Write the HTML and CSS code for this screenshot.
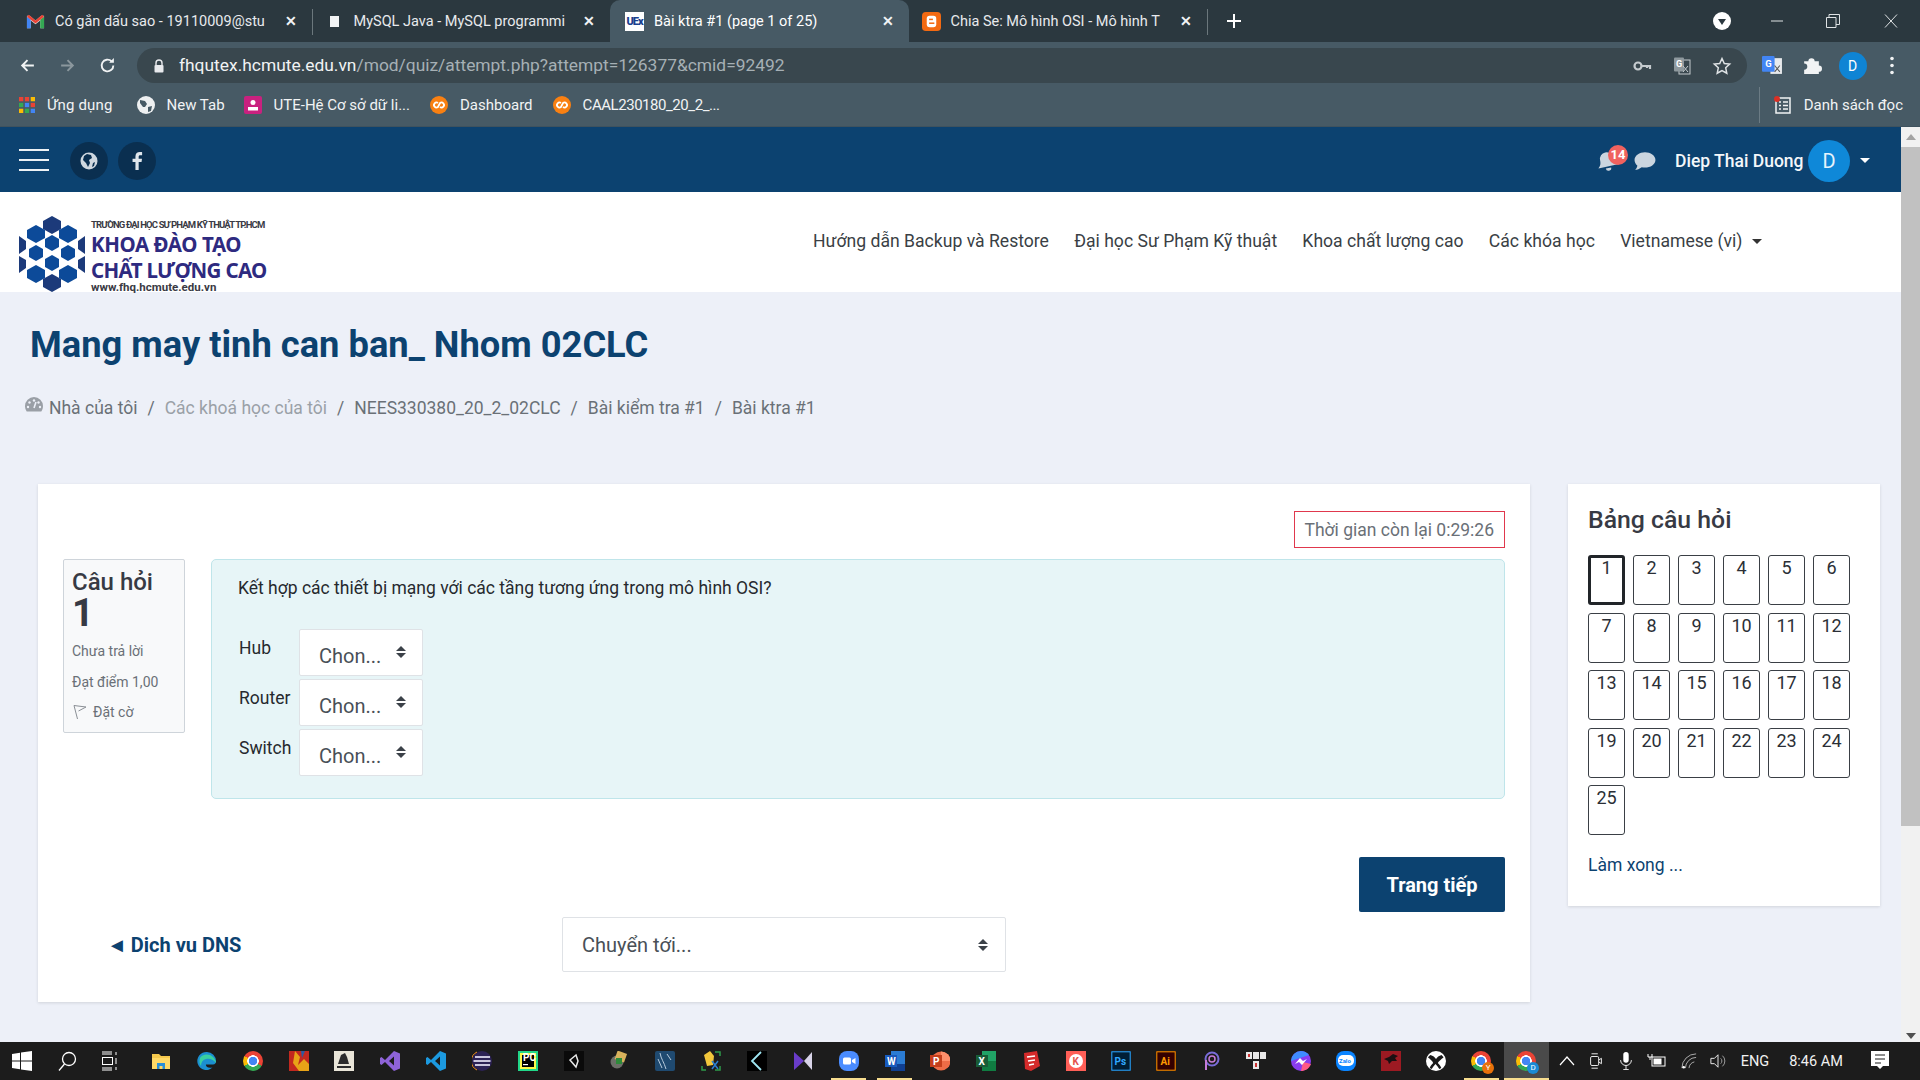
FILE: index.html

```html
<!DOCTYPE html>
<html lang="vi">
<head>
  <meta charset="UTF-8">
  <title>Bài ktra #1 (page 1 of 25)</title>
  <link rel="stylesheet" href="styles.css">
</head>
<body>
  <!-- browser chrome -->
  <div class="tabstrip">
    <div class="tab">
      <svg class="favicon" viewBox="0 0 20 16"><path d="M1 15V2l3 0 6 5 6-5h3v13h-4V7l-5 4-5-4v8z" fill="#e8e8e8"/><path d="M1 15V3l4 3v9z" fill="#4285f4"/><path d="M15 15V6l4-3v12z" fill="#34a853"/><path d="M1 3l2-2 7 6 7-6 2 2-9 7z" fill="#ea4335"/></svg>
      <span class="tab-title">Có gắn dấu sao - 19110009@stu</span>
      <span class="tab-x">✕</span>
    </div>
    <div class="tab tab-sep">
      <span class="favicon fav-doc"><i></i></span>
      <span class="tab-title">MySQL Java - MySQL programmi</span>
      <span class="tab-x">✕</span>
    </div>
    <div class="tab tab-active">
      <span class="favicon fav-ute">UEx</span>
      <span class="tab-title">Bài ktra #1 (page 1 of 25)</span>
      <span class="tab-x">✕</span>
    </div>
    <div class="tab tab-sep-right">
      <svg class="favicon" viewBox="0 0 20 20"><rect width="20" height="20" rx="4" fill="#f36a12"/><rect x="5" y="4" width="10" height="12" rx="3" fill="#fff"/><rect x="7.5" y="7" width="4" height="1.6" fill="#f36a12"/><rect x="7.5" y="11" width="5.5" height="1.6" fill="#f36a12"/></svg>
      <span class="tab-title">Chia Se: Mô hình OSI - Mô hình T</span>
      <span class="tab-x">✕</span>
    </div>
    <svg class="new-tab" viewBox="0 0 16 16"><path d="M8 1v14M1 8h14" stroke="#fff" stroke-width="2"/></svg>
    <div class="win-controls">
      <svg class="profile-drop" viewBox="0 0 18 18"><circle cx="9" cy="9" r="9" fill="#fff"/><path d="M5 7h8l-4 6z" fill="#2b383f"/></svg>
      <svg class="win-btn" viewBox="0 0 14 14"><path d="M1 7h12" stroke="#dfe3e5"/></svg>
      <svg class="win-btn" viewBox="0 0 14 14"><path d="M.5 3.500h9.500v10H.5zM3 3.500V.5h10.500v10H10" fill="none" stroke="#dfe3e5"/></svg>
      <svg class="win-btn" viewBox="0 0 14 14"><path d="M1 .5l12 13M13 .5L1 13.500" stroke="#dfe3e5"/></svg>
    </div>
  </div>

  <div class="toolbar">
    <svg class="tool-ic" viewBox="0 0 16 16"><path d="M14 8H3M8 3L3 8l5 5" fill="none" stroke="#f1f3f4" stroke-width="1.800"/></svg>
    <svg class="tool-ic" viewBox="0 0 16 16"><path d="M2 8h11M8 3l5 5-5 5" fill="none" stroke="#8b979d" stroke-width="1.800"/></svg>
    <svg class="tool-ic" viewBox="0 0 16 16"><path d="M13.500 8a5.500 5.500 0 1 1-1.700-4" fill="none" stroke="#f1f3f4" stroke-width="1.800"/><path d="M9.500 5.500H14V1z" fill="#f1f3f4"/></svg>
    <div class="omnibox">
      <svg class="lock" viewBox="0 0 12 14"><path d="M3 6V4a3 3 0 0 1 6 0v2" fill="none" stroke="#e8eaed" stroke-width="1.400"/><rect x="1.500" y="6" width="9" height="7.500" rx="1" fill="#e8eaed"/></svg>
      <span class="url"><b>fhqutex.hcmute.edu.vn</b>/mod/quiz/attempt.php?attempt=126377&amp;cmid=92492</span>
      <svg class="omni-ic" viewBox="0 0 20 20"><circle cx="6" cy="10" r="3.500" fill="none" stroke="#c5cbce" stroke-width="2.200"/><path d="M9 10h9v3M15 10v2" fill="none" stroke="#c5cbce" stroke-width="2.200"/></svg>
      <svg class="omni-ic" viewBox="0 0 20 20"><rect x="7" y="4" width="11" height="14" fill="#39474e" stroke="#c5cbce"/><rect x="2" y="1.500" width="10" height="14" rx="1" fill="#8f999e"/><text x="4" y="11" class="g-letter">G</text><path d="M11 10l5 6M16 10l-5 6" stroke="#c5cbce"/></svg>
      <svg class="omni-ic" viewBox="0 0 20 20"><path d="M10 2.500l2.300 5 5.400.6-4 3.700 1.100 5.400-4.800-2.700-4.800 2.700 1.100-5.400-4-3.700 5.400-.6z" fill="none" stroke="#dfe3e5" stroke-width="1.500"/></svg>
    </div>
    <svg class="ext-ic" viewBox="0 0 20 20"><rect x="8" y="3" width="11" height="15" fill="#e8eaed"/><rect x="0" y="1" width="12" height="15" rx="1" fill="#4285f4"/><text x="3" y="11" class="g-letter">G</text><path d="M12 10l5 6M17 10l-5 6" stroke="#555"/></svg>
    <svg class="ext-ic" viewBox="0 0 20 20"><path d="M3 6h4a3 3 0 0 1 6 0h4v4a3 3 0 0 1 0 6v2H3v-4a3 3 0 0 0 0-6z" fill="#f1f3f4"/></svg>
    <span class="profile-dot">D</span>
    <svg class="ext-ic kebab" viewBox="0 0 6 20"><circle cx="3" cy="3" r="1.800" fill="#f1f3f4"/><circle cx="3" cy="10" r="1.800" fill="#f1f3f4"/><circle cx="3" cy="17" r="1.800" fill="#f1f3f4"/></svg>
  </div>

  <div class="bookmarks">
    <span class="bm"><svg class="bm-ic" viewBox="0 0 15 15"><rect width="4" height="4" fill="#ea4335"/><rect x="5.500" width="4" height="4" fill="#ea4335"/><rect x="11" width="4" height="4" fill="#fbbc05"/><rect y="5.500" width="4" height="4" fill="#34a853"/><rect x="5.500" y="5.500" width="4" height="4" fill="#4285f4"/><rect x="11" y="5.500" width="4" height="4" fill="#ea4335"/><rect y="11" width="4" height="4" fill="#fbbc05"/><rect x="5.500" y="11" width="4" height="4" fill="#34a853"/><rect x="11" y="11" width="4" height="4" fill="#4285f4"/></svg>Ứng dụng</span>
    <span class="bm"><svg class="bm-ic" viewBox="0 0 18 18"><circle cx="9" cy="9" r="9" fill="#eef0f1"/><path d="M3 4l5 1 2 3-2 3-2 0-3-4zM11 11l4-1-1 5-3 1z" fill="#475a65"/></svg>New Tab</span>
    <span class="bm"><svg class="bm-ic" viewBox="0 0 18 18"><rect width="18" height="18" rx="2" fill="#c9217f"/><circle cx="9" cy="6.500" r="2.500" fill="#fff"/><rect x="4" y="11" width="10" height="3.500" fill="#fff"/></svg>UTE-Hệ Cơ sở dữ li...</span>
    <span class="bm"><svg class="bm-ic" viewBox="0 0 18 18"><circle cx="9" cy="9" r="9" fill="#f98012"/><path d="M8 7a2.500 2.500 0 1 0 0 4l2-4a2.500 2.500 0 1 1 0 4" fill="none" stroke="#fff" stroke-width="1.800"/></svg>Dashboard</span>
    <span class="bm"><svg class="bm-ic" viewBox="0 0 18 18"><circle cx="9" cy="9" r="9" fill="#f98012"/><path d="M8 7a2.500 2.500 0 1 0 0 4l2-4a2.500 2.500 0 1 1 0 4" fill="none" stroke="#fff" stroke-width="1.800"/></svg>CAAL230180_20_2_...</span>
    <span class="reading-list"><svg class="bm-ic" viewBox="0 0 18 18"><rect x="2" y="2" width="14" height="15" fill="none" stroke="#f1f3f4" stroke-width="1.500"/><path d="M5 6h2M9 6h5M5 9.500h2M9 9.500h5M5 13h2M9 13h5" stroke="#f1f3f4" stroke-width="1.500"/><circle cx="3" cy="3" r="3" fill="#d93025"/></svg>Danh sách đọc</span>
  </div>

  <!-- page viewport -->
  <div class="viewport">
    <div class="page">
      <nav class="topbar">
        <div class="burger"><i></i><i></i><i></i></div>
        <span class="social"><svg viewBox="0 0 18 18" class="social-ic"><circle cx="9" cy="9" r="8.500" fill="#cfd8e0"/><path d="M7 2l4 1 1 3-3 2 1 3-2 4-2-4-3-3 1-4zM13 11l2-1-1 4-2 1z" fill="#0a2f50"/></svg></span>
        <span class="social"><svg viewBox="0 0 18 18" class="social-ic social-fb"><path d="M10.500 17V10h2.600l.4-3h-3V5.200c0-.9.300-1.400 1.500-1.400h1.600V1.100C13.300 1 12.400 1 11.500 1 9.200 1 7.600 2.400 7.600 4.900V7H5v3h2.600v7z" fill="#dfe6ec"/></svg></span>
        <div class="user-area">
          <span class="bell">
            <svg viewBox="0 0 20 20" class="bell-ic"><path d="M10 2a6 6 0 0 1 6 6c0 4 1 5 3 7H1c2-2 3-3 3-7a6 6 0 0 1 6-6zM7.500 16.500h5a2.500 2.500 0 0 1-5 0z" fill="#cbd5df"/></svg>
            <span class="badge">14</span>
          </span>
          <svg viewBox="0 0 20 18" class="chat-ic"><path d="M10 1c5 0 9.500 3 9.500 7s-4.500 7-9.500 7c-1 0-2-.1-3-.4C5 16 3 17 1 17c1.500-1.500 2-3 2-4C1.500 11.800.5 10 .5 8 .5 4 5 1 10 1z" fill="#cbd5df"/></svg>
          <span class="user-name">Diep Thai Duong</span>
          <span class="avatar">D</span>
          <i class="caret caret-white"></i>
        </div>
      </nav>

      <header class="brand-bar">
        <div class="logo">
          <svg class="logo-hex" viewBox="0 0 66 76">
            <g fill="#0c4a99">
              <polygon points="33,0 42,5 42,13 33,18 24,13 24,5" fill="#1c3a7a"/>
              <polygon points="17,9 26,14 26,22 17,27 8,22 8,14"/>
              <polygon points="49,9 58,14 58,22 49,27 40,22 40,14"/>
              <polygon points="33,19 40,23 40,31 33,35 26,31 26,23"/>
              <polygon points="17,29 24,33 24,41 17,45 10,41 10,33"/>
              <polygon points="49,29 56,33 56,41 49,45 42,41 42,33"/>
              <polygon points="33,39 40,43 40,51 33,55 26,51 26,43"/>
              <polygon points="17,49 26,54 26,62 17,67 8,62 8,54"/>
              <polygon points="49,49 58,54 58,62 49,67 40,62 40,54"/>
              <polygon points="33,58 42,63 42,71 33,76 24,71 24,63" fill="#1c3a7a"/>
              <polygon points="0,20 7,25 7,33 0,38" fill="#1c3a7a"/>
              <polygon points="66,20 59,25 59,33 66,38" fill="#1c3a7a"/>
              <polygon points="0,40 7,44 7,52 0,57" fill="#1c3a7a"/>
              <polygon points="66,40 59,44 59,52 66,57" fill="#1c3a7a"/>
            </g>
          </svg>
          <div class="logo-text">
            <span class="logo-school">TRƯỜNG ĐẠI HỌC SƯ PHẠM KỸ THUẬT TP.HCM</span>
            <span class="logo-big logo-big-top">KHOA ĐÀO TẠO</span>
            <span class="logo-big">CHẤT LƯỢNG CAO</span>
            <span class="logo-web">www.fhq.hcmute.edu.vn</span>
          </div>
        </div>
        <ul class="main-menu">
          <li>Hướng dẫn Backup và Restore</li>
          <li>Đại học Sư Phạm Kỹ thuật</li>
          <li>Khoa chất lượng cao</li>
          <li>Các khóa học</li>
          <li>Vietnamese ‎(vi)‎ <i class="caret caret-dark"></i></li>
        </ul>
      </header>

      <div class="course-head">
        <h1>Mang may tinh can ban_ Nhom 02CLC</h1>
        <div class="crumbs">
          <svg class="crumb-ic" viewBox="0 0 18 15"><path d="M9 0a9 9 0 0 1 9 9c0 2-.6 4-1.700 5.500H1.700A9 9 0 0 1 0 9a9 9 0 0 1 9-9z" fill="#9a9fa6"/><circle cx="9" cy="3.500" r="1.200" fill="#edf0f8"/><circle cx="4.500" cy="5.500" r="1.200" fill="#edf0f8"/><circle cx="13.500" cy="5.500" r="1.200" fill="#edf0f8"/><circle cx="3" cy="10" r="1.200" fill="#edf0f8"/><circle cx="15" cy="10" r="1.200" fill="#edf0f8"/><path d="M9 11l2-6" stroke="#edf0f8" stroke-width="1.600"/></svg>
          <span>Nhà của tôi</span><em>/</em>
          <span class="crumb-light">Các khoá học của tôi</span><em>/</em>
          <span>NEES330380_20_2_02CLC</span><em>/</em>
          <span>Bài kiểm tra #1</span><em>/</em>
          <span>Bài ktra #1</span>
        </div>
      </div>

      <div class="content">
        <main class="quiz-card">
          <div class="timer-row"><div class="timer">Thời gian còn lại 0:29:26</div></div>
          <div class="question">
            <aside class="q-info">
              <h3>Câu hỏi <span class="q-no">1</span></h3>
              <p>Chưa trả lời</p>
              <p>Đạt điểm 1,00</p>
              <p class="flag"><svg viewBox="0 0 14 16" class="flag-ic"><path d="M4.500 15L1 1.500l12 1.500-7.500 4" fill="none" stroke="#8a8f95"/></svg>Đặt cờ</p>
            </aside>
            <div class="q-body">
              <p class="q-text">Kết hợp các thiết bị mạng với các tầng tương ứng trong mô hình OSI?</p>
              <div class="match-row"><span class="match-label">Hub</span><div class="pick"><span>Chon...</span><i class="updown"></i></div></div>
              <div class="match-row"><span class="match-label">Router</span><div class="pick"><span>Chon...</span><i class="updown"></i></div></div>
              <div class="match-row"><span class="match-label">Switch</span><div class="pick"><span>Chon...</span><i class="updown"></i></div></div>
            </div>
          </div>
          <div class="next-row"><span class="next-btn">Trang tiếp</span></div>
          <div class="activity-nav">
            <span class="prev-link"><i class="prev-arrow">◄</i> Dich vu DNS</span>
            <div class="jump"><span>Chuyển tới...</span><i class="updown updown-sm"></i></div>
          </div>
        </main>

        <aside class="nav-card">
          <h2>Bảng câu hỏi</h2>
          <div class="q-grid">
            <span class="q-btn q-current">1</span><span class="q-btn">2</span><span class="q-btn">3</span><span class="q-btn">4</span><span class="q-btn">5</span>
            <span class="q-btn">6</span><span class="q-btn">7</span><span class="q-btn">8</span><span class="q-btn">9</span><span class="q-btn">10</span>
            <span class="q-btn">11</span><span class="q-btn">12</span><span class="q-btn">13</span><span class="q-btn">14</span><span class="q-btn">15</span>
            <span class="q-btn">16</span><span class="q-btn">17</span><span class="q-btn">18</span><span class="q-btn">19</span><span class="q-btn">20</span>
            <span class="q-btn">21</span><span class="q-btn">22</span><span class="q-btn">23</span><span class="q-btn">24</span><span class="q-btn">25</span>
          </div>
          <a class="finish">Làm xong ...</a>
        </aside>
      </div>
    </div>

    <div class="scrollbar">
      <i class="sb-up"></i>
      <div class="sb-thumb"></div>
      <i class="sb-down"></i>
    </div>
  </div>

  <!-- windows taskbar -->
  <footer class="taskbar">
    <span class="tb-item"><svg viewBox="0 0 20 20"><path d="M0 3l8-1.200V9.500H0zM9 1.600L20 0v9.500H9zM0 10.500h8v7.700L0 17zM9 10.500h11V20L9 18.400z" fill="#fff"/></svg></span>
    <span class="tb-item"><svg viewBox="0 0 20 20"><circle cx="12" cy="8" r="6.500" fill="none" stroke="#fff" stroke-width="1.300"/><path d="M7.500 13L2 19.500" stroke="#fff" stroke-width="1.300"/></svg></span>
    <span class="tb-item"><svg viewBox="0 0 20 20"><path d="M1 1h10M1 3h10M1 17h10M1 19h10M15 1v3M15 7v6M15 16v3" stroke="#fff"/><rect x="1.500" y="6.500" width="10" height="7" fill="none" stroke="#fff"/></svg></span>
    <span class="tb-item"><svg viewBox="0 0 20 20"><path d="M1 3h7l2 2h9v13H1z" fill="#f5c84c"/><path d="M1 7h18v11H1z" fill="#ffd966"/><path d="M6 12h8v6h-2.500v-3h-3v3H6z" fill="#2a8fd6"/></svg></span>
    <span class="tb-item"><svg viewBox="0 0 20 20"><path d="M10 1a9 9 0 0 1 9 9c0 2-1 3.500-3 3.500H9c-.6 2.500 2.500 4 6.500 3A9 9 0 1 1 10 1z" fill="#1b8fd0"/><path d="M3 7c2-4 9-5 13-1 2 2 3 4 3 6-2-3-6-5-10-4-3 .8-5 3-5 7-1.500-2-2-5-1-8z" fill="#39d0a0"/></svg></span>
    <span class="tb-item"><span class="ic-chrome"></span></span>
    <span class="tb-item"><svg viewBox="0 0 20 20"><rect width="20" height="20" fill="#c2281f"/><path d="M6 0l5 6-2 8 6-6 5 5v7H10L4 12z" fill="#e8a317"/><path d="M12 0h4l-3 7z" fill="#2c5aa0"/></svg></span>
    <span class="tb-item"><svg viewBox="0 0 20 20"><rect width="20" height="20" fill="#e9e5d8"/><path d="M4 13l3-9 4-2 2 4 2 7z" fill="#2b2b2b"/><rect x="3" y="15" width="14" height="2" fill="#2b2b2b"/></svg></span>
    <span class="tb-item"><svg viewBox="0 0 20 20"><path d="M14 0l6 2.500v15L14 20 5 11l-3.500 3L0 13V7l1.500-1L5 9zM14 5.500L9 10l5 4.500z" fill="#8e63d8"/></svg></span>
    <span class="tb-item"><svg viewBox="0 0 20 20"><path d="M14 0l6 2.500v15L14 20 5 11l-3.500 3L0 13V7l1.500-1L5 9zM14 5.500L9 10l5 4.500z" fill="#1c9ae0"/></svg></span>
    <span class="tb-item"><svg viewBox="0 0 20 20"><circle cx="10" cy="10" r="10" fill="#2c2255"/><path d="M3 6h15M1.500 10h17M3 14h15" stroke="#c9c5dd" stroke-width="2.200"/><path d="M5 1A10 10 0 0 0 5 19" fill="none" stroke="#f7941e"/></svg></span>
    <span class="tb-item"><svg viewBox="0 0 20 20"><rect width="20" height="20" fill="#21d789"/><rect x="2" y="2" width="16" height="16" fill="#fcf84a"/><rect x="4" y="4" width="12" height="12" fill="#000"/><rect x="5" y="13" width="5" height="1.200" fill="#fff"/><text x="5" y="10" class="tiny-letter">PC</text></svg></span>
    <span class="tb-item"><svg viewBox="0 0 20 20"><rect width="20" height="20" fill="#0a0a0a"/><path d="M12 4l-6 5 6 7 2-6z" fill="none" stroke="#e8e8e8" stroke-width="1.500"/></svg></span>
    <span class="tb-item"><svg viewBox="0 0 20 20"><circle cx="8" cy="11" r="6.500" fill="#6d7069"/><rect x="7" y="1" width="10" height="9" transform="rotate(20 12 5)" fill="#d8b25c"/><rect x="7" y="7" width="6" height="6" fill="#2e8b3a"/></svg></span>
    <span class="tb-item"><svg viewBox="0 0 20 20"><rect width="20" height="20" rx="2" fill="#1f4a70"/><path d="M5 2c1 6 4 9 6 16M12 3l4 6M3 8l4 9" stroke="#b7cbdc" fill="none"/></svg></span>
    <span class="tb-item"><svg viewBox="0 0 20 20"><path d="M3 4l6-4 4 5-1 9-6 1z" fill="#f2c63b"/><path d="M14 1h5v4M19 15v4h-5M1 15v4h4" fill="none" stroke="#2e9a4a" stroke-width="1.500"/><path d="M11 10l6 8M17 10l-6 8" stroke="#2a7fd0" stroke-width="1.500"/></svg></span>
    <span class="tb-item"><svg viewBox="0 0 20 20"><rect width="20" height="20" fill="#000"/><path d="M14 1L5 10l9 9" fill="none" stroke="#9fe6f2" stroke-width="1.800"/></svg></span>
    <span class="tb-item"><svg viewBox="0 0 20 20"><path d="M1 1l10 9-10 9z" fill="#6a3cc9"/><path d="M19 1v18l-8-9z" fill="#d8d4e8"/></svg></span>
    <span class="tb-item"><svg viewBox="0 0 20 20"><rect y="0" width="20" height="20" rx="8" fill="#4a8cff"/><rect x="4" y="6.500" width="8" height="7" rx="1.500" fill="#fff"/><path d="M13 9l3.500-2v6L13 11z" fill="#fff"/></svg></span>
    <span class="tb-item"><svg viewBox="0 0 20 20"><rect x="6" y="0" width="14" height="20" fill="#2b7cd3"/><rect x="6" y="13" width="14" height="7" fill="#103f91"/><rect x="0" y="4" width="12" height="12" fill="#185abd"/><text x="2" y="14" class="tiny-letter">W</text></svg></span>
    <span class="tb-item"><svg viewBox="0 0 20 20"><circle cx="11" cy="10" r="9.500" fill="#ed6c47"/><path d="M11 .5A9.500 9.500 0 0 1 20.500 10H11z" fill="#ff8f6b"/><rect x="0" y="4" width="12" height="12" fill="#c43e1c"/><text x="3" y="14" class="tiny-letter">P</text></svg></span>
    <span class="tb-item"><svg viewBox="0 0 20 20"><rect x="6" y="0" width="14" height="20" fill="#21a366"/><rect x="6" y="10" width="14" height="10" fill="#107c41"/><rect x="0" y="4" width="12" height="12" fill="#185c37"/><text x="2.500" y="14" class="tiny-letter">X</text></svg></span>
    <span class="tb-item"><svg viewBox="0 0 20 20"><path d="M3 2l13-2 3 15-9 5-6-2z" fill="#d52b2b"/><path d="M6 6l8-1M7 10l7-1M8 14l5-1" stroke="#fff" stroke-width="1.400"/></svg></span>
    <span class="tb-item"><svg viewBox="0 0 20 20"><rect width="20" height="20" fill="#ff5f57"/><circle cx="10" cy="10" r="7" fill="#fff"/><text x="6.500" y="14" class="tiny-letter tiny-red">K</text></svg></span>
    <span class="tb-item"><svg viewBox="0 0 20 20"><rect width="20" height="20" fill="#001e36"/><rect x=".8" y=".8" width="18.400" height="18.400" fill="none" stroke="#31a8ff"/><text x="3.500" y="14" class="tiny-letter tiny-blue">Ps</text></svg></span>
    <span class="tb-item"><svg viewBox="0 0 20 20"><rect width="20" height="20" fill="#330000"/><rect x=".8" y=".8" width="18.400" height="18.400" fill="none" stroke="#ff9a00"/><text x="4.500" y="14" class="tiny-letter tiny-orange">Ai</text></svg></span>
    <span class="tb-item"><svg viewBox="0 0 20 20"><circle cx="11" cy="8" r="6.500" fill="none" stroke="#7a6cd8" stroke-width="2"/><circle cx="11" cy="8" r="3" fill="none" stroke="#c77bd8" stroke-width="1.500"/><path d="M5 9v10" stroke="#c77bd8" stroke-width="2"/></svg></span>
    <span class="tb-item"><svg viewBox="0 0 20 20"><rect x="0" y="1" width="6" height="7" fill="#e8e8e8"/><rect x="7" y="1" width="6" height="7" fill="#e8e8e8"/><rect x="14" y="1" width="6" height="7" fill="#e8e8e8"/><rect x="7" y="10" width="6" height="8" fill="#e8e8e8"/><rect x="2" y="3" width="2" height="3" fill="#c33"/><rect x="9" y="12" width="2" height="4" fill="#c33"/></svg></span>
    <span class="tb-item"><svg viewBox="0 0 20 20"><circle cx="10" cy="10" r="10" fill="#8a3cf0"/><path d="M0 10a10 10 0 0 1 10-10c3 0 6 1.500 8 4z" fill="#3f8cff"/><path d="M10 20c4 0 8-2 10-7l-8-2z" fill="#ff5b84"/><path d="M4 13l5-6 3 3 4-2-5 6-3-3z" fill="#fff"/></svg></span>
    <span class="tb-item"><svg viewBox="0 0 20 20"><rect width="20" height="20" rx="8" fill="#0a84ff"/><rect x="2" y="4" width="16" height="11" rx="5" fill="#fff"/><text x="3" y="12" class="tiny-letter tiny-zalo">Zalo</text></svg></span>
    <span class="tb-item"><svg viewBox="0 0 20 20"><rect width="20" height="20" fill="#9c1a22"/><path d="M3 8l5-2 4-3 5 2-3 2 2 3-5 0-3 3-1-3z" fill="#1a1012"/></svg></span>
    <span class="tb-item"><svg viewBox="0 0 20 20"><path d="M10 0a10 10 0 1 1 0 20 10 10 0 0 1 0-20z" fill="#fff"/><path d="M4.500 4c2.500.7 4.300 2.200 5.500 4 1.200-1.800 3-3.300 5.500-4 1 1 1.500 1.500 2 2.500-2.300 1.500-4.500 3.700-5.700 5.500 1.700 1.700 3 3.500 3.500 5-.7.500-1.300.8-2 1-1-1.700-2.300-3.300-3.800-5-1.500 1.700-2.800 3.300-3.800 5-.7-.2-1.300-.5-2-1 .5-1.500 1.800-3.300 3.500-5C6.500 10.200 4.300 8 2 6.500 2.500 5.500 3.500 4.800 4.500 4z" fill="#1a1a1a"/></svg></span>
    <span class="tb-item tb-running"><span class="ic-chrome"><i class="chrome-badge chrome-badge-y">Y</i></span></span>
    <span class="tb-item tb-running tb-active"><span class="ic-chrome"><i class="chrome-badge">D</i></span></span>
    <div class="tray">
      <svg class="tray-ic" viewBox="0 0 16 16"><path d="M1 12l7-8 7 8" fill="none" stroke="#fff" stroke-width="1.200"/></svg>
      <svg class="tray-ic" viewBox="0 0 16 20"><rect x="2" y="5" width="9" height="10" rx="1.500" fill="none" stroke="#fff"/><path d="M11 9l3-2v6l-3-2M3 2h7M3 18h7" fill="none" stroke="#fff"/></svg>
      <svg class="tray-ic" viewBox="0 0 14 20"><rect x="4" y="0" width="6" height="12" rx="3" fill="#fff"/><path d="M1 9a6 6 0 0 0 12 0M7 15v4M4 19.500h6" fill="none" stroke="#fff"/></svg>
      <svg class="tray-ic tray-wide" viewBox="0 0 20 16"><rect x="5" y="4" width="13" height="9" fill="none" stroke="#fff"/><rect x="6.500" y="5.500" width="8" height="6" fill="#fff"/><path d="M1 1v3h4V1M3 4v3" fill="none" stroke="#fff"/></svg>
      <svg class="tray-ic" viewBox="0 0 18 18"><path d="M1 17A16 16 0 0 1 17 1M5 17A12 12 0 0 1 17 5M9 17a8 8 0 0 1 6-7" fill="none" stroke="#bbb"/><circle cx="3" cy="16" r="1.500" fill="#fff"/></svg>
      <svg class="tray-ic" viewBox="0 0 18 18"><path d="M1 6h4l4-4v14l-4-4H1z" fill="none" stroke="#fff"/><path d="M12 6a4 4 0 0 1 0 6M14 3a8 8 0 0 1 0 12" fill="none" stroke="#aaa"/></svg>
      <span class="tray-text tray-lang">ENG</span>
      <span class="tray-text tray-time">8:46 AM</span>
      <svg class="tray-ic tray-note" viewBox="0 0 18 20"><path d="M0 0h18v15h-6l-3 3-3-3H0z" fill="#fff"/><path d="M4 4h10M4 8h10M4 12h6" stroke="#1c1c1c" stroke-width="1.200"/></svg>
    </div>
  </footer>
</body>
</html>
```

FILE: styles.css

```css
/* Reset */
* { margin: 0; padding: 0; box-sizing: border-box; }
html, body {
  width: 1920px;
  height: 1080px;
  overflow: hidden;
}
body {
  display: flex;
  flex-direction: column;
  font-family: Roboto, "Noto Sans", sans-serif;
  color: #333;
  background: #edf0f8;
}
i, em { font-style: normal; }

/* tab strip */
.tabstrip {
  height: 42px;
  flex: none;
  display: flex;
  align-items: center;
  padding-left: 13px;
  background: #2b383f;
}
.tab {
  width: 298.500px;
  height: 42px;
  display: flex;
  align-items: center;
  padding: 0 15px 0 13px;
  color: #e8eaed;
  font-size: 14.500px;
  flex: none;
  position: relative;
}
.tab-sep::before {
  content: "";
  position: absolute;
  left: 0; top: 9px;
  width: 1px; height: 26px;
  background: #6b777c;
}
.tab-sep-right::after {
  content: "";
  position: absolute;
  right: -1px; top: 9px;
  width: 1px; height: 26px;
  background: #6b777c;
}
.tab-active {
  background: #475a65;
  border-radius: 10px 10px 0 0;
  color: #fff;
  padding-left: 15px;
}
.favicon {
  width: 19px;
  height: 19px;
  flex: none;
  margin-right: 10px;
  display: inline-flex;
  align-items: center;
  justify-content: center;
}
.fav-doc i {
  width: 9px;
  height: 11px;
  background: #f1f3f4;
}
.fav-ute {
  background: #fff;
  color: #1b3f8f;
  font-size: 11px;
  font-weight: 900;
  letter-spacing: -1px;
  overflow: hidden;
}
.tab-title {
  flex: 1;
  min-width: 0;
  white-space: nowrap;
}
.tab-x {
  margin-left: 12px;
  font-size: 14px;
  font-weight: 700;
  color: #f1f3f4;
  width: 12px;
}
.new-tab {
  width: 16px;
  height: 16px;
  margin-left: 19px;
}
.win-controls {
  margin-left: auto;
  display: flex;
  align-items: center;
  padding-right: 22px;
}
.profile-drop {
  width: 18px;
  height: 18px;
  margin-right: 39px;
}
.win-btn {
  width: 14px;
  height: 14px;
  margin-left: 42px;
}
.profile-drop + .win-btn { margin-left: 0; }
.win-btn:last-child { margin-left: 44px; }

/* toolbar */
.toolbar {
  height: 42px;
  flex: none;
  display: flex;
  align-items: center;
  padding: 5px 0 0 19px;
  background: #475a65;
}
.tool-ic {
  width: 17px;
  height: 17px;
  margin: -1px 23px 0 0;
  flex: none;
}
.tool-ic:nth-child(3) { margin-right: 21px; }
.omnibox {
  width: 1610px;
  height: 35px;
  flex: none;
  display: flex;
  align-items: center;
  background: #39474e;
  border-radius: 18px;
  padding: 0 15px 0 16px;
}
.lock {
  width: 12px;
  height: 14px;
  margin-right: 14px;
}
.url {
  flex: 1;
  font-size: 17.400px;
  line-height: 24px;
  margin-top: -2px;
  color: #a6b0b5;
  white-space: nowrap;
}
.url b {
  font-weight: 400;
  color: #f1f3f4;
}
.omni-ic {
  width: 20px;
  height: 20px;
  margin-left: 20px;
}
.g-letter {
  font-size: 9px;
  font-weight: 700;
  fill: #fff;
}
.ext-ic {
  width: 21px;
  height: 21px;
  margin-left: 18px;
  flex: none;
}
.omnibox + .ext-ic { margin-left: 14.500px; }
.profile-dot {
  width: 28px;
  height: 28px;
  margin-left: 17px;
  border-radius: 50%;
  background: #0f84d4;
  color: #fff;
  font-size: 14px;
  display: flex;
  align-items: center;
  justify-content: center;
  flex: none;
}
.kebab {
  width: 6px;
  margin-left: 22px;
}

/* bookmarks */
.bookmarks {
  height: 43px;
  flex: none;
  display: flex;
  align-items: center;
  padding-left: 19px;
  background: #475a65;
  color: #f1f3f4;
  font-size: 15px;
  border-bottom: 1px solid #3f525e;
}
.bm {
  display: flex;
  align-items: center;
  margin-right: 20px;
  white-space: nowrap;
}
.bm:first-child {
  margin-right: 24px;
  letter-spacing: .15px;
}
.bm:nth-child(2) { margin-right: 19px; }
.bm:nth-child(5) { letter-spacing: -.45px; }
.bm-ic {
  width: 18px;
  height: 18px;
  margin-right: 12px;
  flex: none;
}
.bm:first-child .bm-ic { width: 16px; height: 16px; }
.reading-list {
  margin-left: auto;
  height: 36px;
  display: flex;
  align-items: center;
  padding-left: 14px;
  padding-right: 17px;
  border-left: 1px solid #6b7b84;
  white-space: nowrap;
}

/* viewport */
.viewport {
  flex: 1;
  min-height: 0;
  display: flex;
}
.page {
  flex: 1;
  min-width: 0;
  overflow: hidden;
}
.scrollbar {
  width: 19px;
  flex: none;
  background: #f1f1f1;
  display: flex;
  flex-direction: column;
  align-items: center;
}
.sb-thumb {
  width: 100%;
  height: 679px;
  background: #c1c1c1;
}
.sb-up, .sb-down {
  width: 0; height: 0;
  border-left: 5px solid transparent;
  border-right: 5px solid transparent;
}
.sb-up {
  border-bottom: 6px solid #a3a3a3;
  margin: 7px 0 7px;
}
.sb-down {
  border-top: 6px solid #505050;
  margin-top: auto;
  margin-bottom: 3px;
}

/* top navbar */
.topbar {
  height: 65px;
  display: flex;
  align-items: center;
  padding: 2px 0 0 19px;
  background: #0c4270;
  color: #fff;
}
.burger {
  width: 30px;
  height: 22px;
  display: flex;
  flex-direction: column;
  justify-content: space-between;
  margin: -2px 21px 0 0;
}
.burger i {
  height: 2px;
  background: #eef2f5;
}
.social {
  width: 38px;
  height: 38px;
  margin-right: 10px;
  border-radius: 50%;
  background: #0a2f50;
  display: flex;
  align-items: center;
  justify-content: center;
}
.social-ic {
  width: 18px;
  height: 18px;
}
.social-fb {
  width: 20px;
  height: 20px;
}
.user-area {
  margin-left: auto;
  display: flex;
  align-items: center;
  padding-right: 31px;
}
.bell {
  position: relative;
  margin-right: 16px;
  display: flex;
}
.bell-ic {
  width: 22px;
  height: 22px;
  transform: rotate(-12deg);
}
.badge {
  position: absolute;
  top: -5px;
  left: 12px;
  width: 20px;
  height: 20px;
  border-radius: 50%;
  background: #f0625f;
  color: #fff;
  font-size: 13px;
  font-weight: 700;
  line-height: 20px;
  text-align: center;
}
.chat-ic {
  width: 22px;
  height: 20px;
  margin-right: 19px;
}
.user-name {
  font-size: 17.500px;
  font-weight: 500;
  color: #f4f7fa;
  margin-right: 4.500px;
}
.avatar {
  width: 42px;
  height: 42px;
  border-radius: 50%;
  background: #0f88d8;
  color: #e6f3fc;
  font-size: 20px;
  display: flex;
  align-items: center;
  justify-content: center;
  margin-right: 10px;
}
.caret {
  display: inline-block;
  width: 0; height: 0;
  border-left: 5px solid transparent;
  border-right: 5px solid transparent;
  border-top: 5px solid currentColor;
}
.caret-white { color: #fff; }
.caret-dark { color: #333; margin-left: 5px; vertical-align: 3px; }

/* brand bar */
.brand-bar {
  height: 100px;
  display: flex;
  align-items: flex-end;
  padding-left: 19px;
  background: #fff;
  position: relative;
}
.logo {
  display: flex;
  align-items: flex-end;
}
.logo-hex {
  width: 66px;
  height: 76px;
}
.logo-text {
  display: flex;
  flex-direction: column;
  margin-left: 6px;
  color: #2e2a80;
}
.logo-school {
  font-size: 9.500px;
  font-weight: 700;
  color: #3a3a44;
  letter-spacing: -.86px;
  white-space: nowrap;
  line-height: 12px;
}
.logo-big {
  font-family: "Noto Sans", Roboto, sans-serif;
  font-size: 20.500px;
  font-weight: 700;
  letter-spacing: -.65px;
  line-height: 26px;
  white-space: nowrap;
}
.logo-big-top {
  letter-spacing: -.4px;
}
.logo-web {
  font-size: 11.500px;
  font-weight: 700;
  color: #3a3a44;
  line-height: 9px;
}
.main-menu {
  list-style: none;
  display: flex;
  position: absolute;
  left: 813px;
  top: 39px;
  gap: 25.200px;
  font-size: 17.600px;
  color: #3a3f45;
  white-space: nowrap;
}

/* course heading */
.course-head {
  height: 192px;
  padding: 31px 0 0 30px;
}
h1 {
  font-size: 36.300px;
  line-height: 44px;
  font-weight: 700;
  color: #0c4270;
}
.crumbs {
  display: flex;
  align-items: center;
  margin: 29px 0 0 -5px;
  font-size: 17.500px;
  line-height: 24px;
  color: #6a7077;
}
.crumb-ic {
  width: 18px;
  height: 15px;
  margin: -8px 6px 0 0;
}
.crumb-light { color: #9aa0a7; }
.crumbs em {
  margin: 0 10px;
  color: #6a7077;
}

/* content columns */
.content {
  display: flex;
  align-items: flex-start;
  padding-left: 38px;
}
.quiz-card {
  width: 1492px;
  height: 518px;
  padding: 27px 25px 0;
  background: #fff;
  box-shadow: 0 1px 3px rgba(0,0,0,.12);
}
.timer-row {
  display: flex;
  justify-content: flex-end;
}
.timer {
  height: 37px;
  padding: 0 10px;
  border: 1px solid #e0384d;
  font-size: 17.500px;
  line-height: 36px;
  color: #6a7077;
}
.question {
  display: flex;
  gap: 26px;
  margin-top: 11px;
}
.q-info {
  width: 122px;
  height: 174px;
  flex: none;
  padding: 8px 8px 0;
  background: #f8f9fa;
  border: 1px solid #ced4da;
  border-radius: 2px;
  font-size: 14px;
  color: #6a7077;
}
.q-info h3 {
  font-size: 24px;
  font-weight: 500;
  line-height: 29px;
  color: #373a44;
  margin-bottom: 12px;
}
.q-no {
  display: block;
  font-size: 38px;
  font-weight: 700;
  line-height: 32px;
}
.q-info p {
  line-height: 20px;
  margin-bottom: 10.500px;
}
.flag {
  display: flex;
  align-items: center;
}
.flag-ic {
  width: 14px;
  height: 16px;
  margin: 0 6px 0 1px;
}
.q-body {
  flex: 1;
  height: 240px;
  padding: 16px 26px 0;
  background: #e7f5f7;
  border: 1px solid #bfe5ea;
  border-radius: 5px;
}
.q-text {
  font-size: 17.500px;
  line-height: 24px;
  color: #26292e;
  margin-bottom: 29px;
}
.match-row {
  display: flex;
  margin-bottom: 3px;
  margin-left: 1px;
}
.match-label {
  width: 60px;
  flex: none;
  font-size: 17.500px;
  line-height: 24px;
  color: #26292e;
  padding-top: 7px;
}
.pick {
  width: 124px;
  height: 47px;
  padding: 12px 0 0 19px;
  display: flex;
  background: #fff;
  border: 1px solid #dfe2e6;
  border-radius: 2px;
  font-size: 20px;
  line-height: 28px;
  color: #495057;
  position: relative;
}
.updown {
  position: absolute;
  right: 16px;
  top: 16px;
  width: 10px;
  height: 12px;
}
.updown::before, .updown::after {
  content: "";
  position: absolute;
  left: 0;
  border-left: 5px solid transparent;
  border-right: 5px solid transparent;
}
.updown::before { top: 0; border-bottom: 5px solid #3b4148; }
.updown::after { bottom: 0; border-top: 5px solid #3b4148; }
.next-row {
  display: flex;
  justify-content: flex-end;
  margin-top: 58px;
}
.next-btn {
  width: 146px;
  height: 55px;
  background: #0c4270;
  color: #fff;
  font-size: 20px;
  font-weight: 700;
  border-radius: 2px;
  display: flex;
  align-items: center;
  justify-content: center;
}
.activity-nav {
  display: flex;
  align-items: center;
  margin-top: 5px;
}
.prev-link {
  width: 499px;
  padding-left: 47px;
  font-size: 20px;
  font-weight: 700;
  color: #0c4270;
  white-space: nowrap;
}
.prev-arrow {
  font-size: 20px;
  margin: 0 -1px 0 -3px;
  line-height: 20px;
}
.jump {
  width: 444px;
  height: 55px;
  padding-left: 19px;
  display: flex;
  align-items: center;
  background: #fff;
  border: 1px solid #dfe2e6;
  border-radius: 2px;
  font-size: 20px;
  color: #495057;
  position: relative;
}
.updown-sm { top: 21px; right: 17px; }

/* question navigation */
.nav-card {
  width: 312px;
  height: 422px;
  margin-left: 38px;
  padding: 20px 20px 0;
  background: #fff;
  box-shadow: 0 1px 3px rgba(0,0,0,.12);
}
.nav-card h2 {
  font-size: 24.800px;
  font-weight: 500;
  line-height: 32px;
  color: #373a44;
  margin-bottom: 19px;
}
.q-grid {
  display: grid;
  grid-template-columns: repeat(6, 37px);
  grid-auto-rows: 50px;
  column-gap: 8px;
  row-gap: 7.500px;
}
.q-btn {
  border: 1px solid #3a3f45;
  border-radius: 3px;
  font-size: 18px;
  line-height: 22px;
  padding-top: 1px;
  color: #2b2f36;
  text-align: center;
}
.q-current {
  border: 3px solid #212529;
  padding-top: 0;
  line-height: 19px;
}
.finish {
  display: block;
  margin-top: 18px;
  font-size: 17.500px;
  line-height: 24px;
  color: #0c4270;
}

/* taskbar */
.taskbar {
  height: 38px;
  flex: none;
  display: flex;
  align-items: stretch;
  background: #1c1c1c;
  color: #fff;
}
.tb-item {
  width: 45px;
  flex: none;
  display: flex;
  align-items: center;
  justify-content: center;
  position: relative;
}
.tb-item:nth-child(-n+21) { margin-right: .85px; }
.tb-item:nth-child(-n+3) { width: 44.500px; margin-right: 0; }
.tb-item:nth-child(4) { margin-left: 5px; }
.tb-item svg {
  width: 20px;
  height: 20px;
}
.tb-running::after,
.tb-item:nth-child(19)::after,
.tb-item:nth-child(20)::after {
  content: "";
  position: absolute;
  left: 5px; right: 5px; bottom: 0;
  height: 2px;
  background: #f7dd8f;
}
.tb-active { background: #4a4a4a; }
.tb-active::after { left: 0; right: 0; }
.ic-chrome {
  width: 20px;
  height: 20px;
  border-radius: 50%;
  position: relative;
  background:
    radial-gradient(circle, #4285f4 0 4px, #fff 4.500px 5.500px, transparent 6px),
    conic-gradient(#ea4335 0 120deg, #34a853 120deg 240deg, #fbbc05 240deg 300deg, #ea4335 300deg);
}
.chrome-badge {
  position: absolute;
  right: -3px;
  bottom: -3px;
  width: 12px;
  height: 12px;
  border-radius: 50%;
  background: #1a8ad4;
  font-size: 8px;
  line-height: 12px;
  text-align: center;
  color: #fff;
}
.chrome-badge-y { background: #e8710a; }
.tiny-letter {
  font-size: 10px;
  font-weight: 700;
  fill: #fff;
}
.tiny-red { fill: #e5534b; }
.tiny-blue { fill: #31a8ff; }
.tiny-orange { fill: #ff9a00; }
.tiny-zalo { font-size: 6px; fill: #0a84ff; }
.tray {
  flex: 1;
  display: flex;
  align-items: center;
  padding-left: 10px;
}
.tray-ic {
  width: 16px;
  height: 18px;
  margin-right: 13.500px;
  flex: none;
}
.tray-wide { width: 20px; }
.tray-text {
  font-size: 14.500px;
  color: #f1f1f1;
  white-space: nowrap;
}
.tray-lang { margin-left: 1px; }
.tray-time { margin-left: 20px; }
.tray-note {
  margin-left: 27.500px;
  margin-right: 0;
  width: 20px;
  height: 20px;
}
```
